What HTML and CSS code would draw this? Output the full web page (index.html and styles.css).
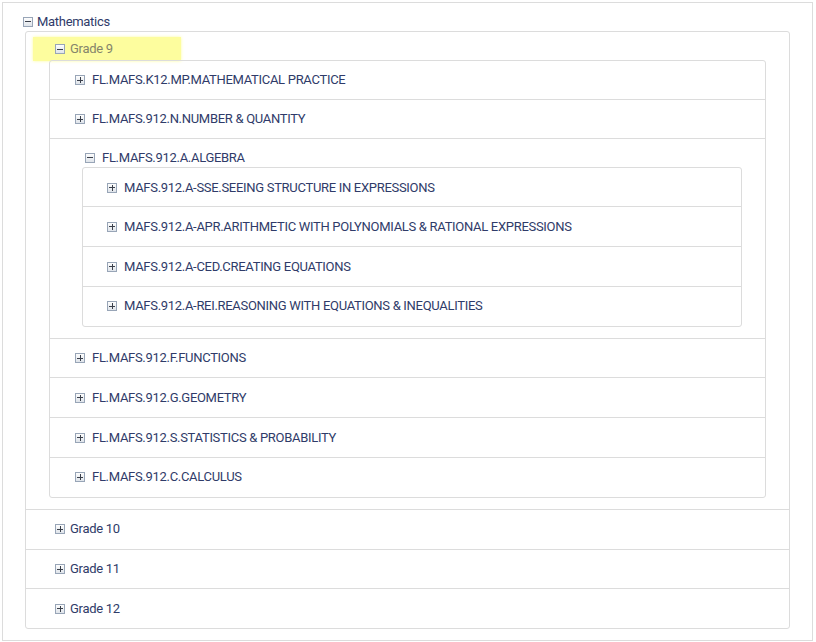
FILE: index.html
```html
<!DOCTYPE html>
<html lang="en">
<head>
    <meta charset="UTF-8">
    <meta name="viewport" content="width=device-width, initial-scale=1.0">
    <title>Standards Tree</title>
    <link rel="stylesheet" href="styles.css">
</head>
<body>
    <div class="panel">
        <div class="label top"><span class="toggle minus"></span>Mathematics</div>
        <ul class="box grades">
            <li class="open">
                <div class="label current"><span class="toggle minus"></span>Grade 9</div>
                <ul class="box domains">
                    <li><div class="label"><span class="toggle"></span>FL.MAFS.K12.MP.MATHEMATICAL PRACTICE</div></li>
                    <li><div class="label"><span class="toggle"></span>FL.MAFS.912.N.NUMBER &amp; QUANTITY</div></li>
                    <li class="open">
                        <div class="label"><span class="toggle minus"></span>FL.MAFS.912.A.ALGEBRA</div>
                        <ul class="box clusters">
                            <li><div class="label"><span class="toggle"></span>MAFS.912.A-SSE.SEEING STRUCTURE IN EXPRESSIONS</div></li>
                            <li><div class="label"><span class="toggle"></span>MAFS.912.A-APR.ARITHMETIC WITH POLYNOMIALS &amp; RATIONAL EXPRESSIONS</div></li>
                            <li><div class="label"><span class="toggle"></span>MAFS.912.A-CED.CREATING EQUATIONS</div></li>
                            <li><div class="label"><span class="toggle"></span>MAFS.912.A-REI.REASONING WITH EQUATIONS &amp; INEQUALITIES</div></li>
                        </ul>
                    </li>
                    <li><div class="label"><span class="toggle"></span>FL.MAFS.912.F.FUNCTIONS</div></li>
                    <li><div class="label"><span class="toggle"></span>FL.MAFS.912.G.GEOMETRY</div></li>
                    <li><div class="label"><span class="toggle"></span>FL.MAFS.912.S.STATISTICS &amp; PROBABILITY</div></li>
                    <li><div class="label"><span class="toggle"></span>FL.MAFS.912.C.CALCULUS</div></li>
                </ul>
            </li>
            <li><div class="label"><span class="toggle"></span>Grade 10</div></li>
            <li><div class="label"><span class="toggle"></span>Grade 11</div></li>
            <li><div class="label"><span class="toggle"></span>Grade 12</div></li>
        </ul>
    </div>
</body>
</html>
```

FILE: styles.css
```css
body {
    margin: 0;
    font-family: Roboto, "Liberation Sans", Arial, sans-serif;
    font-size: 13px;
    letter-spacing: -0.3px;
    color: #2f3b69;
    background: #fff;
}
.panel {
    margin: 2px;
    width: 811px;
    box-sizing: border-box;
    border: 1px solid #dcdcdc;
    padding: 9px 22px 11px 22px;
}
ul {
    list-style: none;
    margin: 0;
    padding: 0;
}
.box {
    border: 1px solid #dcdcdc;
    border-radius: 3px;
}
.box > li {
    border-top: 1px solid #dcdcdc;
}
.box > li:first-child { border-top: none; }

.label {
    display: flex;
    align-items: center;
    height: 20px;
    line-height: 20px;
    white-space: nowrap;
}
.toggle {
    position: relative;
    flex: none;
    width: 8px;
    height: 8px;
    margin-right: 6px;
    border: 1px solid #98a5b7;
    background: linear-gradient(#fdfdfd, #dfe4ea);
}
.toggle::before, .toggle::after {
    content: "";
    position: absolute;
    background: #3a3f4a;
}
.toggle::before { left: 1px; top: 3.5px; width: 6px; height: 1px; }
.toggle::after { left: 3.5px; top: 1px; width: 1px; height: 6px; }
.toggle.minus::after { display: none; }

/* level 0 */
.label.top { margin-left: -2px; height: 19px; }
.label.top .toggle { margin-right: 4px; }

/* grades */
.grades > li > .label { padding: 9.5px 0 9.3px 29px; }
.grades > li.open { padding: 0 23px 11px 23px; }
.grades > li.open > .label.current {
    margin: 5px 0 -1px -16px;
    padding: 2px 0 2px 22px;
    width: 126px;
    background: #fdfd9e;
    box-shadow: 0 0 3px #fdfd9e;
    color: #85856b;
}
.grades > li > .label .toggle { margin-right: 5px; }

/* domains */
.domains > li > .label { padding: 9.5px 0 9.3px 25px; }
.domains > li:first-child > .label { padding-top: 9px; padding-bottom: 8.7px; }
.domains > li.open { padding: 0 23px 11px 32px; }
.domains > li.open > .label { padding: 9px 0 0 3px; height: 19px; }
.domains > li > .label .toggle { margin-right: 7px; }

/* clusters */
.clusters > li > .label { padding: 9.5px 0 9.2px 24px; }
.clusters > li:first-child > .label { padding-top: 9.5px; padding-bottom: 8.5px; }
.clusters > li > .label .toggle { margin-right: 7px; }
```
